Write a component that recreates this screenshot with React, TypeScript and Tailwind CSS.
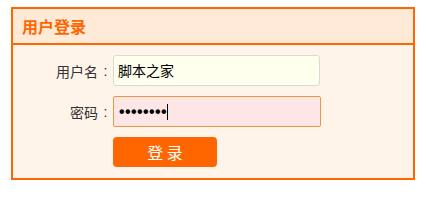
import React from "react";

const font = { fontFamily: '"Noto Sans CJK SC", "Liberation Sans", sans-serif' };

const Field = ({ label, children }: { label: string; children: React.ReactNode }) => (
  <div className="flex items-center">
    <span className="flex w-[100px] items-center justify-end text-[14px] leading-none text-[#333]">
      {label}
      <span className="w-[15px] text-center" style={{ fontFamily: '"Liberation Sans", sans-serif' }}>
        :
      </span>
    </span>
    {children}
  </div>
);

const LoginBox = () => {
  return (
    <div className="w-[404px] border-2 border-[#ff6600] bg-[#fff4ea]" style={font}>
      <div className="flex h-[36px] items-center border-b-2 border-[#ff6600] bg-[#ffead8] pl-[9px]">
        <h1 className="text-[16px] font-bold leading-none text-[#ff6600]">用户登录</h1>
      </div>

      <div className="flex flex-col gap-[10px] pb-[11px] pt-[10px]">
        <Field label="用户名">
          <div className="flex h-[31px] w-[207px] items-center rounded-[3px] border border-[#d9d9d9] bg-[#ffffee] pl-[4px] text-[14px] text-black">
            脚本之家
          </div>
        </Field>

        <Field label="密码">
          <div className="flex h-[31px] w-[208px] items-center rounded-[2px] border border-[#e8983f] bg-[#ffe6e6] pl-[5px] text-black">
            <span
              className="text-[16px] font-bold leading-none tracking-[0.4px]"
              style={{ fontFamily: '"Liberation Sans", sans-serif' }}
            >
              ••••••••
            </span>
            <span className="h-[16px] w-px bg-black" />
          </div>
        </Field>

        <div className="pl-[100px]">
          <button className="h-[30px] w-[104px] rounded-[4px] bg-[#ff6600] text-[16px] leading-none text-white">
            登 录
          </button>
        </div>
      </div>
    </div>
  );
};

export default function App() {
  return (
    <div className="min-h-[200px] bg-white pl-[11px] pt-[7px]">
      <LoginBox />
    </div>
  );
}
